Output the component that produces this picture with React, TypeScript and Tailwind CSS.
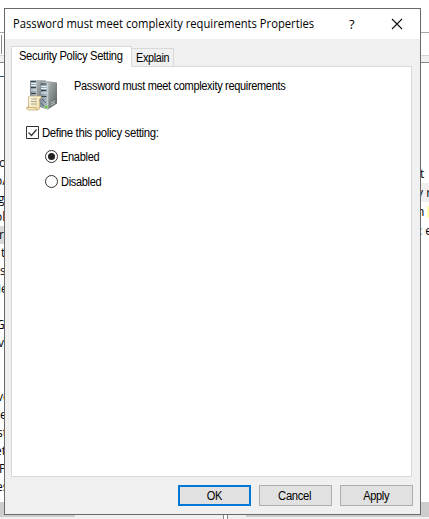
import React from 'react';

const leftRows = [
  { text: 'o', shift: '-ml-px' },
  { text: 'o/', shift: '-ml-[5px]' },
  { text: 'g', shift: '-ml-[2px]' },
  { text: 'ol', shift: '-ml-[5px]' },
  { text: 're', shift: '-ml-px' },
  { text: 't', shift: 'ml-px' },
  { text: 's', shift: 'ml-0' },
  { text: 'ie', shift: '-ml-[2px]' },
  { text: '', shift: '' },
  { text: 'G', shift: '-ml-[4px]' },
  { text: 'v', shift: '-ml-[2px]' },
  { text: '', shift: '' },
  { text: '', shift: '' },
  { text: 've', shift: '-ml-[3px]' },
  { text: 'e', shift: 'ml-0' },
  { text: 'st', shift: '-ml-[3px]' },
  { text: 'et', shift: '-ml-[5px]' },
  { text: 'P', shift: '-ml-px' },
  { text: 'es', shift: '-ml-[4px]' },
];

function Backdrop() {
  return (
    <div className="flex h-full flex-col font-['Open_Sans',sans-serif] text-[12px] text-black">
      <div className="h-8 shrink-0" />
      <div className="flex h-6 shrink-0 items-center border-y border-t-[#a8a8a8] border-b-[#d4d4d4]">
        <div className="ml-px h-[19px] w-px bg-[#8a8a8a]" />
      </div>
      <div className="h-[7px] shrink-0 border-b border-[#828790] bg-[#f0f0f0]" />
      <div className="flex h-[439px] shrink-0 justify-between overflow-hidden">
        <div className="w-[5px] overflow-hidden whitespace-nowrap">
          <div className="h-[91px] pt-[13px]"><div className="h-px w-1 bg-[#36536b]" /></div>
          {leftRows.map((row, i) => (
            <div key={i} className={`h-[18px] leading-[18px] ${i === 4 ? 'bg-[#d9d9d9]' : ''}`}>
              <span className={row.shift}>{row.text}</span>
            </div>
          ))}
        </div>
        <div className="w-[9px] overflow-hidden whitespace-nowrap pt-[101px] leading-[19px]">
          <div className="h-[19px]">t</div>
          <div className="h-[19px] bg-[#f0f0f0]"><span className="-ml-[3px]">y r</span></div>
          <div className="flex h-[19px] items-center"><span className="-ml-[3px]">n</span><span className="ml-[3px] h-3 w-1 bg-[#ffffb0]" /></div>
          <div className="h-[19px]"><span className="-ml-px">: e</span></div>
        </div>
      </div>
      <div className="flex h-[15px] shrink-0 bg-[#f0f0f0]">
        <div className="h-[15px] w-[75px] bg-[#cdcdcd]" />
        <div className="ml-[148px] h-[17px] w-[5px] border-x border-[#828790] bg-white" />
        <div className="ml-[18px] h-[15px] flex-1 bg-[#cdcdcd]" />
      </div>
      <div className="flex h-[2px] shrink-0 bg-[#f0f0f0]">
        <div className="ml-[223px] h-[2px] w-[5px] border-x border-[#828790] bg-white" />
      </div>
    </div>
  );
}

function ServerIcon() {
  return (
    <svg width="32" height="32" viewBox="0 0 32 32" className="block">
      <defs>
        <linearGradient id="side" x1="0" x2="1" y1="0" y2=".6">
          <stop offset="0" stopColor="#c9cfcf" />
          <stop offset=".45" stopColor="#a3abab" />
          <stop offset="1" stopColor="#666e6e" />
        </linearGradient>
        <linearGradient id="front" x1="0" x2="1">
          <stop offset="0" stopColor="#7e8c94" />
          <stop offset="1" stopColor="#b5c1c8" />
        </linearGradient>
        <linearGradient id="paper" x1="0" x2="1" y1="0" y2="1">
          <stop offset="0" stopColor="#fffbe8" />
          <stop offset="1" stopColor="#efdcaa" />
        </linearGradient>
      </defs>
      <path d="M4 1.5 11 1 20 1.5V24L4 22Z" fill="url(#side)" />
      <path d="M4 1.5H11V24L4 22Z" fill="url(#front)" />
      <path d="M5 2.5H10M5 8.5H10M5 14.5H10" stroke="#354047" strokeWidth="1.2" />
      <path d="M5 4.5H10M5 6.5H10M5 11H10" stroke="#e5f0f5" strokeWidth="1.2" />
      <path d="M14 4 21 2 31 3.5V24.5L22 30.5 14 28Z" fill="url(#side)" />
      <path d="M14 3.5 21.5 4V30.5L14 28Z" fill="url(#front)" />
      <path d="M15 5H20.5M15 11.5H20.5M15 17.5H20.5" stroke="#35434a" strokeWidth="1.2" />
      <path d="M15 7.5H20.5M15 9.5H20.5M15 14H20.5" stroke="#e5f0f5" strokeWidth="1.2" />
      <path d="M16 20 20 24M15 24 18 27" stroke="#53646e" />
      <path d="M21.8 4V30" stroke="#e2e7e7" strokeWidth=".7" />
      <path d="m25 24 4-2M25 26 29 24" stroke="#e1e4e4" strokeWidth=".7" />
      <path d="M19 26.5 21.5 27.5V29.5L19 28.5Z" fill="#61d51e" />
      <path d="M3.5 17Q2 18 2.5 20V28H1Q-.5 30 2 31H11Q14 31 13.5 28V20Q16 20 15 17Z" fill="url(#paper)" stroke="#bea06a" strokeWidth=".7" />
      <path d="M1 28.5H10Q10 31 12 31" fill="none" stroke="#c5a360" strokeWidth=".8" />
      <path d="M5 20H11M5 22.5H11M5 25H11" stroke="#9b947f" strokeWidth=".8" />
    </svg>
  );
}

export default function App() {
  return (
    <main className="relative h-[519px] w-[429px] overflow-hidden bg-white">
      <Backdrop />
      <section className="absolute left-1 top-2 flex h-[507px] w-[417px] flex-col border border-[#69696c] bg-[#f0f0f0] font-['Liberation_Sans',sans-serif] text-[12px] tracking-[-0.35px] text-black">
        <header className="flex h-[30px] shrink-0 items-center bg-white font-['Open_Sans',sans-serif] tracking-normal">
          <h1 className="ml-2 w-[336px] origin-left scale-x-[.935] whitespace-nowrap text-[12px]">Password must meet complexity requirements Properties</h1>
          <span className="w-[42px] text-[13px] leading-[18px]">?</span>
          <svg width="12" height="12" viewBox="0 0 12 12"><path d="M1 1 11 11M11 1 1 11" stroke="#111" strokeWidth="1.1" /></svg>
        </header>
        <div className="mt-[7px] flex h-5 shrink-0 items-end pl-1.5">
          <div className="z-10 -mb-px h-[21px] w-[121px] whitespace-nowrap border border-b-0 border-[#d9d9d9] bg-white pl-[7px] leading-[19px]">
            <span className="inline-block origin-left scale-x-[.93]">Security Policy Setting</span>
          </div>
          <div className="-ml-px h-[18px] w-[43px] border border-b-0 border-[#d9d9d9] bg-[#f0f0f0] pl-1 leading-[19px]">
            <span className="inline-block origin-left scale-x-[.9]">Explain</span>
          </div>
        </div>
        <div className="ml-1.5 h-[411px] w-[401px] shrink-0 border border-[#d9d9d9] bg-white">
          <div className="flex pl-3.5 pt-3">
            <ServerIcon />
            <p className="ml-4 origin-left scale-x-[.916] whitespace-nowrap leading-[14px]">Password must meet complexity requirements</p>
          </div>
          <div className="mt-[15px] flex h-[13px] items-center pl-3.5">
            <svg width="13" height="13" viewBox="0 0 13 13"><path d="M.5.5h12v12H.5Z" fill="white" stroke="#333" /><path d="m2.5 6.5 3 3 5-6" fill="none" stroke="#333" strokeWidth="1.2" /></svg>
            <span className="ml-[3px] origin-left scale-x-[.945]">Define this policy setting:</span>
          </div>
          <div className="mt-[11px] flex h-[13px] items-center pl-[33px]">
            <svg width="13" height="13" viewBox="0 0 13 13"><circle cx="6.5" cy="6.5" r="6" fill="white" stroke="#333" /><circle cx="6.5" cy="6.5" r="3.5" fill="#222" /></svg>
            <span className="ml-[3px] origin-left scale-x-[.92]">Enabled</span>
          </div>
          <div className="mt-3 flex h-[13px] items-center pl-[33px]">
            <svg width="13" height="13" viewBox="0 0 13 13"><circle cx="6.5" cy="6.5" r="6" fill="white" stroke="#333" /></svg>
            <span className="ml-[3px] origin-left scale-x-[.92]">Disabled</span>
          </div>
        </div>
        <footer className="mt-2 flex justify-end gap-2 pr-[7px]">
          <button className="h-[21px] w-[73px] border-2 border-[#0078d7] bg-[#e1e1e1] pr-px leading-[18px]"><span className="inline-block scale-x-[.92]">OK</span></button>
          <button className="h-[21px] w-[73px] border border-[#adadad] bg-[#e1e1e1] pr-px leading-[20px]"><span className="inline-block scale-x-[.94]">Cancel</span></button>
          <button className="h-[21px] w-[73px] border border-[#adadad] bg-[#e1e1e1] pr-px leading-[20px]"><span className="inline-block scale-x-[.92]">Apply</span></button>
        </footer>
      </section>
    </main>
  );
}
